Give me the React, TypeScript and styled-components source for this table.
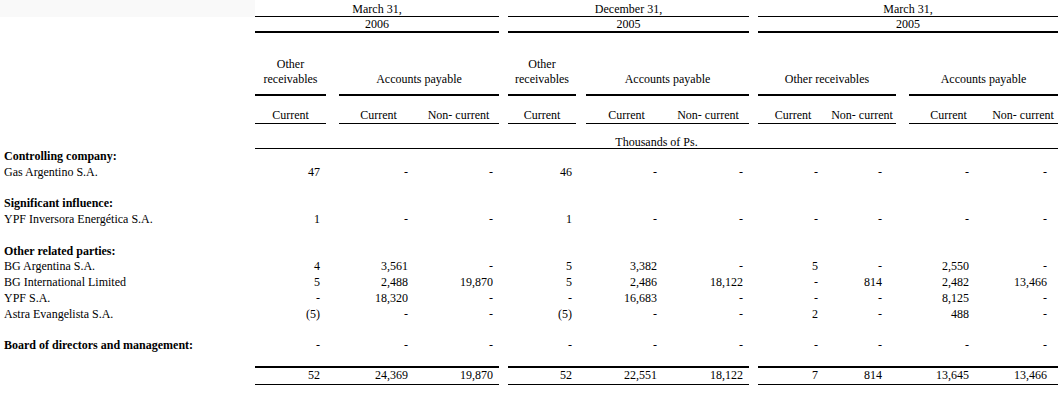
import styled, { createGlobalStyle } from 'styled-components';

const GlobalStyle = createGlobalStyle`
  html, body {
    margin: 0;
    padding: 0;
    background: #ffffff;
  }
  body {
    font-family: "Liberation Serif", "Times New Roman", serif;
    font-size: 12px;
    color: #000000;
  }
`;

// label | c1 gap c2 c3 | gap | c4 gap c5 c6 | gap | c7 c8 gap c9 c10
const COLUMNS =
  '255px 71px 13px 79px 81px 9px 68px 10px 81px 82px 9px 70px 68px 13px 79px 70px';

// right padding of each value column, so figures sit where they do in the print
const PAD = [6, 10, 6, 4, 10, 6, 10, 14, 19, 11];

const LINE = 15.75;

const Sheet = styled.div`
  width: 1058px;
`;

const Row = styled.div<{ $h: number }>`
  display: grid;
  grid-template-columns: ${COLUMNS};
  height: ${(p) => p.$h}px;
`;

type Align = 'left' | 'center' | 'right';

const Cell = styled.div<{
  $span?: number;
  $align?: Align;
  $rule?: number;
  $top?: number;
  $pb?: number;
  $pr?: number;
  $pl?: number;
  $lh?: number;
  $bold?: boolean;
  $shade?: boolean;
}>`
  grid-column: span ${(p) => p.$span ?? 1};
  box-sizing: border-box;
  display: flex;
  flex-direction: column;
  justify-content: flex-end;
  text-align: ${(p) => p.$align ?? 'center'};
  line-height: ${(p) => p.$lh ?? LINE}px;
  padding: 0 ${(p) => p.$pr ?? 0}px ${(p) => p.$pb ?? 0}px ${(p) => p.$pl ?? 0}px;
  border-bottom: ${(p) => (p.$rule ? `${p.$rule}px solid #000` : 'none')};
  border-top: ${(p) => (p.$top ? `${p.$top}px solid #000` : 'none')};
  font-weight: ${(p) => (p.$bold ? 700 : 400)};
  background: ${(p) => (p.$shade ? '#f9f9f9' : 'transparent')};
  white-space: nowrap;
`;

const Label = styled(Cell).attrs({ $align: 'left' as Align, $pl: 4 })``;

const Gap = styled.div<{ $rule?: number; $top?: number }>`
  box-sizing: border-box;
  border-bottom: ${(p) => (p.$rule ? `${p.$rule}px solid #000` : 'none')};
  border-top: ${(p) => (p.$top ? `${p.$top}px solid #000` : 'none')};
`;

type Line = { label: string; bold?: boolean; values?: string[] };

const lines: Line[] = [
  { label: 'Controlling company:', bold: true },
  { label: 'Gas Argentino S.A.', values: ['47', '-', '-', '46', '-', '-', '-', '-', '-', '-'] },
  { label: '' },
  { label: 'Significant influence:', bold: true },
  { label: 'YPF Inversora Energética S.A.', values: ['1', '-', '-', '1', '-', '-', '-', '-', '-', '-'] },
  { label: '' },
  { label: 'Other related parties:', bold: true },
  { label: 'BG Argentina S.A.', values: ['4', '3,561', '-', '5', '3,382', '-', '5', '-', '2,550', '-'] },
  {
    label: 'BG International Limited',
    values: ['5', '2,488', '19,870', '5', '2,486', '18,122', '-', '814', '2,482', '13,466'],
  },
  { label: 'YPF S.A.', values: ['-', '18,320', '-', '-', '16,683', '-', '-', '-', '8,125', '-'] },
  { label: 'Astra Evangelista S.A.', values: ['(5)', '-', '-', '(5)', '-', '-', '2', '-', '488', '-'] },
  { label: '' },
  { label: 'Board of directors and management:', bold: true, values: ['-', '-', '-', '-', '-', '-', '-', '-', '-', '-'] },
];

const totals = ['52', '24,369', '19,870', '52', '22,551', '18,122', '7', '814', '13,645', '13,466'];

// where the narrow spacer columns fall between value columns
const GAP_AFTER = [0, 2, 3, 5, 7];

const Figures = ({ values, top, rule, pb }: { values: string[]; top?: number; rule?: number; pb?: number }) => {
  const out: JSX.Element[] = [];
  values.forEach((v, i) => {
    out.push(
      <Cell key={`v${i}`} $align="right" $pr={PAD[i]} $top={top} $rule={rule} $pb={pb}>
        {v}
      </Cell>,
    );
    if (GAP_AFTER.includes(i)) {
      // spacers inside a period group carry the rules, spacers between groups do not
      const inside = i === 0 || i === 3 || i === 7;
      out.push(<Gap key={`g${i}`} $top={inside ? top : undefined} $rule={inside ? rule : undefined} />);
    }
  });
  return <>{out}</>;
};

const App = () => {
  return (
    <>
      <GlobalStyle />
      <Sheet>
        <Row $h={17}>
          <Cell $shade />
          <Cell $span={4} $rule={1} $lh={14}>March 31,</Cell>
          <Gap />
          <Cell $span={4} $rule={1} $lh={14}>December 31,</Cell>
          <Gap />
          <Cell $span={5} $rule={1} $lh={14}>March 31,</Cell>
        </Row>
        <Row $h={16}>
          <Cell />
          <Cell $span={4} $rule={2} $lh={14}>2006</Cell>
          <Gap />
          <Cell $span={4} $rule={2} $lh={14}>2005</Cell>
          <Gap />
          <Cell $span={5} $rule={2} $lh={14}>2005</Cell>
        </Row>
        <Row $h={63}>
          <Cell />
          <Cell $rule={2} $lh={15.5} $pb={6.5}>
            <span>Other</span>
            <span>receivables</span>
          </Cell>
          <Gap />
          <Cell $span={2} $rule={2} $lh={15.5} $pb={6.5}>Accounts payable</Cell>
          <Gap />
          <Cell $rule={2} $lh={15.5} $pb={6.5}>
            <span>Other</span>
            <span>receivables</span>
          </Cell>
          <Gap />
          <Cell $span={2} $rule={2} $lh={15.5} $pb={6.5}>Accounts payable</Cell>
          <Gap />
          <Cell $span={2} $rule={2} $lh={15.5} $pb={6.5}>Other receivables</Cell>
          <Gap />
          <Cell $span={2} $rule={2} $lh={15.5} $pb={6.5}>Accounts payable</Cell>
        </Row>
        <Row $h={28}>
          <Cell />
          <Cell $rule={1} $lh={15} $pb={0.5}>Current</Cell>
          <Gap />
          <Cell $rule={1} $lh={15} $pb={0.5}>Current</Cell>
          <Cell $rule={1} $lh={15} $pb={0.5}>Non- current</Cell>
          <Gap />
          <Cell $rule={1} $lh={15} $pb={0.5}>Current</Cell>
          <Gap />
          <Cell $rule={1} $lh={15} $pb={0.5}>Current</Cell>
          <Cell $rule={1} $lh={15} $pb={0.5}>Non- current</Cell>
          <Gap />
          <Cell $rule={1} $lh={15} $pb={0.5}>Current</Cell>
          <Cell $rule={1} $lh={15} $pb={0.5}>Non- current</Cell>
          <Gap />
          <Cell $rule={1} $lh={15} $pb={0.5}>Current</Cell>
          <Cell $rule={1} $lh={15} $pb={0.5}>Non- current</Cell>
        </Row>
        <Row $h={25}>
          <Cell />
          <Cell $span={15} $rule={1} $lh={11}>Thousands of Ps.</Cell>
        </Row>
        {lines.map((line, i) => (
          <Row key={i} $h={LINE}>
            <Label $bold={line.bold}>{line.label}</Label>
            {line.values ? <Figures values={line.values} /> : null}
          </Row>
        ))}
        {/* spacer above the totals, shorter than a full line */}
        <Row $h={12.25} />
        <Row $h={19}>
          <Cell />
          <Figures values={totals} top={2} rule={1} pb={0} />
        </Row>
      </Sheet>
    </>
  );
};

export default App;
